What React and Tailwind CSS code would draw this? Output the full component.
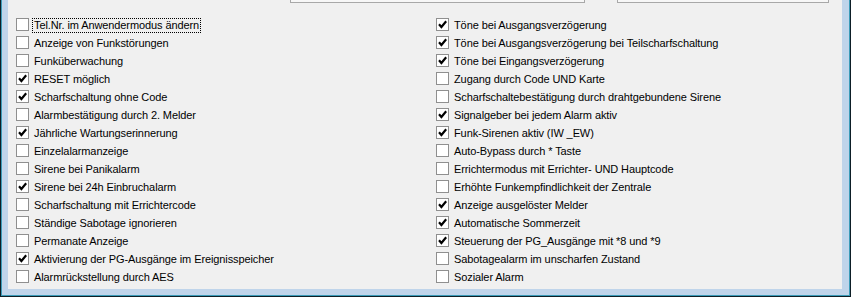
import React from "react";

const leftItems = [
  { label: "Tel.Nr. im Anwendermodus ändern", checked: false, focus: true },
  { label: "Anzeige von Funkstörungen", checked: false },
  { label: "Funküberwachung", checked: false },
  { label: "RESET möglich", checked: true },
  { label: "Scharfschaltung ohne Code", checked: true },
  { label: "Alarmbestätigung durch 2. Melder", checked: false },
  { label: "Jährliche Wartungserinnerung", checked: true },
  { label: "Einzelalarmanzeige", checked: false },
  { label: "Sirene bei Panikalarm", checked: false },
  { label: "Sirene bei 24h Einbruchalarm", checked: true },
  { label: "Scharfschaltung mit Errichtercode", checked: false },
  { label: "Ständige Sabotage ignorieren", checked: false },
  { label: "Permanate Anzeige", checked: false },
  { label: "Aktivierung der PG-Ausgänge im Ereignisspeicher", checked: true },
  { label: "Alarmrückstellung durch AES", checked: false },
];

const rightItems = [
  { label: "Töne bei Ausgangsverzögerung", checked: true },
  { label: "Töne bei Ausgangsverzögerung bei Teilscharfschaltung", checked: true },
  { label: "Töne bei Eingangsverzögerung", checked: true },
  { label: "Zugang durch Code UND Karte", checked: false },
  { label: "Scharfschaltebestätigung durch drahtgebundene Sirene", checked: false },
  { label: "Signalgeber bei jedem Alarm aktiv", checked: true },
  { label: "Funk-Sirenen aktiv (IW _EW)", checked: true },
  { label: "Auto-Bypass durch * Taste", checked: false },
  { label: "Errichtermodus mit Errichter- UND Hauptcode", checked: false },
  { label: "Erhöhte Funkempfindlichkeit der Zentrale", checked: false },
  { label: "Anzeige ausgelöster Melder", checked: true },
  { label: "Automatische Sommerzeit", checked: true },
  { label: "Steuerung der PG_Ausgänge mit *8 und *9", checked: true },
  { label: "Sabotagealarm im unscharfen Zustand", checked: false },
  { label: "Sozialer Alarm", checked: false },
];

const CheckRow = ({ label, checked, focus }) => (
  <div className="flex items-start h-[18px]">
    <div className="w-[13px] h-[13px] border border-[#8f8f8f] bg-white flex items-center justify-center shrink-0">
      {checked && (
        <svg width="9" height="9" viewBox="0 0 9 9">
          <path d="M1 4.3 L3.4 7 L8.2 1.3" fill="none" stroke="#000" strokeWidth="2.2" />
        </svg>
      )}
    </div>
    <span
      className={`ml-[3px] px-[1px] leading-[13px] h-[15px] whitespace-nowrap tracking-[-0.1px] ${
        focus ? "border border-dotted border-black" : "border border-transparent"
      }`}
    >
      {label}
    </span>
  </div>
);

export default function App() {
  return (
    <div
      className="w-[851px] h-[297px] border-l border-r border-b border-[#0d1e26] text-[11px] text-black"
      style={{ fontFamily: '"Liberation Sans", Arial, sans-serif' }}
    >
      <div className="h-full border-l border-r border-b border-[#3b9bb8]">
        <div className="h-full border-l-[6px] border-r-[7px] border-b-[6px] border-[#bfd4ea]">
          <div className="h-full bg-[#f0f0f0] pl-[8px]">
            {/* cut-off input boxes at the top */}
            <div className="flex h-[3px]">
              <div className="ml-[274px] w-[295px] border-l border-r border-b border-[#a8a8a8] bg-[#f7f7f7]" />
              <div className="ml-[32px] w-[212px] border-l border-r border-b border-[#a8a8a8] bg-[#f7f7f7]" />
            </div>

            <div className="flex mt-[15px]">
              <div className="w-[420px] flex flex-col">
                {leftItems.map((item, i) => (
                  <CheckRow key={i} {...item} />
                ))}
              </div>
              <div className="flex flex-col">
                {rightItems.map((item, i) => (
                  <CheckRow key={i} {...item} />
                ))}
              </div>
            </div>
          </div>
        </div>
      </div>
    </div>
  );
}
